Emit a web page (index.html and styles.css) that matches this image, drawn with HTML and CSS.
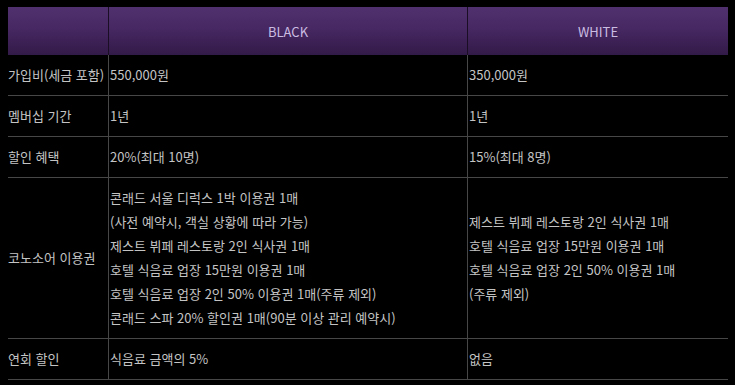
FILE: index.html
```html
<!DOCTYPE html>
<html lang="ko">
<head>
<meta charset="utf-8">
<link rel="stylesheet" href="styles.css">
</head>
<body>
<table class="compare">
  <colgroup>
    <col class="c-label">
    <col class="c-black">
    <col class="c-white">
  </colgroup>
  <thead>
    <tr>
      <th class="label"></th>
      <th>BLACK</th>
      <th>WHITE</th>
    </tr>
  </thead>
  <tbody>
    <tr>
      <td class="label">가입비(세금 포함)</td>
      <td>550,000원</td>
      <td>350,000원</td>
    </tr>
    <tr>
      <td class="label">멤버십 기간</td>
      <td>1년</td>
      <td>1년</td>
    </tr>
    <tr>
      <td class="label">할인 혜택</td>
      <td>20%(최대 10명)</td>
      <td>15%(최대 8명)</td>
    </tr>
    <tr>
      <td class="label">코노소어 이용권</td>
      <td>콘래드 서울 디럭스 1박 이용권 1매<br>(사전 예약시, 객실 상황에 따라 가능)<br>제스트 뷔페 레스토랑 2인 식사권 1매<br>호텔 식음료 업장 15만원 이용권 1매<br>호텔 식음료 업장 2인 50% 이용권 1매(주류 제외)<br>콘래드 스파 20% 할인권 1매(90분 이상 관리 예약시)</td>
      <td>제스트 뷔페 레스토랑 2인 식사권 1매<br>호텔 식음료 업장 15만원 이용권 1매<br>호텔 식음료 업장 2인 50% 이용권 1매<br>(주류 제외)</td>
    </tr>
    <tr>
      <td class="label">연회 할인</td>
      <td>식음료 금액의 5%</td>
      <td>없음</td>
    </tr>
  </tbody>
</table>
</body>
</html>
```
FILE: styles.css
```css
html, body {
  margin: 0;
  background: #000;
}
body {
  padding: 7px 8px;
  font-family: "Noto Sans CJK KR", "Noto Sans", sans-serif;
  font-size: 13px;
  color: #c4c4c4;
}
.compare {
  width: 720px;
  table-layout: fixed;
  border-collapse: separate;
  border-spacing: 0;
}
.c-label { width: 100px; }
.c-black { width: 359px; }
.c-white { width: 261px; }
.compare th {
  height: 48px;
  padding: 0;
  font-weight: normal;
  color: #cbbde2;
  text-align: center;
  background: linear-gradient(to bottom, #51306f 0%, #472862 45%, #321a48 100%);
  border-left: 1px solid #1a0e24;
}
.compare th.label { border-left: 0; }
.compare td {
  padding: 8px 1px;
  line-height: 24px;
  vertical-align: middle;
  text-align: left;
  border-bottom: 1px solid #474747;
  border-left: 1px solid #474747;
  white-space: nowrap;
}
.compare td.label {
  border-left: 0;
  padding-left: 0;
}
```
